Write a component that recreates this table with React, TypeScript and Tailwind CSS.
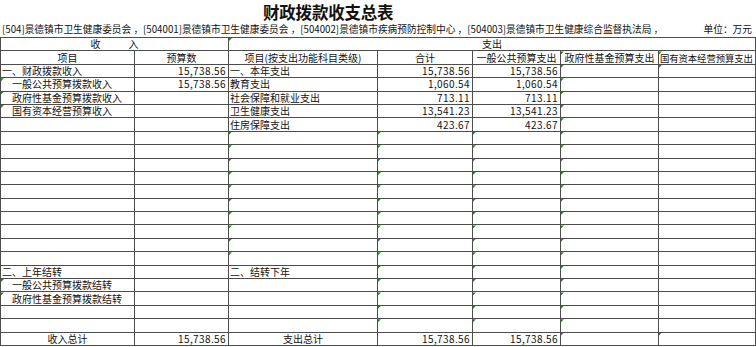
import React from 'react';

type Cell = { t?: string; a?: 'l' | 'r' | 'c'; ind?: boolean; g?: boolean; sm?: boolean };

const TOTAL = '15,738.56';

const labelsIn: Record<number, { t: string; ind?: boolean }> = {
  0: { t: '一、财政拨款收入' },
  1: { t: '一般公共预算拨款收入', ind: true },
  2: { t: '政府性基金预算拨款收入', ind: true },
  3: { t: '国有资本经营预算收入', ind: true },
  15: { t: '二、上年结转' },
  16: { t: '一般公共预算拨款结转', ind: true },
  17: { t: '政府性基金预算拨款结转', ind: true },
};

const outRows: Record<number, [string, string]> = {
  0: ['一、本年支出', TOTAL],
  1: ['教育支出', '1,060.54'],
  2: ['社会保障和就业支出', '713.11'],
  3: ['卫生健康支出', '13,541.23'],
  4: ['住房保障支出', '423.67'],
  15: ['二、结转下年', ''],
};

function buildRows(): Cell[][] {
  const rows: Cell[][] = [];
  for (let i = 0; i < 21; i++) {
    const empty = i >= 5 && i <= 19;
    const last = i === 20;
    const lin = labelsIn[i];
    const out = outRows[i];
    rows.push([
      last
        ? { t: '收入总计', a: 'c' }
        : { t: lin?.t, ind: lin?.ind, g: [1, 2, 3, 16, 17].includes(i) },
      { t: i <= 1 || last ? TOTAL : '', a: 'r' },
      last ? { t: '支出总计', a: 'c' } : { t: out?.[0], g: i >= 5 && i <= 14 },
      { t: last ? TOTAL : out?.[1], a: 'r', g: empty },
      { t: last ? TOTAL : out?.[1], a: 'r', g: empty },
      { g: true },
      { g: i === 0 || last },
    ]);
  }
  return rows;
}

function Mark() {
  return (
    <span className="absolute left-0 top-0 w-[3px] h-[3px] bg-[#1b8f1b] [clip-path:polygon(0_0,100%_0,0_100%)]" />
  );
}

function Td({ c }: { c: Cell }) {
  const align = c.a === 'r' ? 'justify-end pr-[2px] tracking-[0.4px]' : c.a === 'c' ? 'justify-center' : c.ind ? 'pl-[11px]' : 'pl-[1px]';
  return (
    <div className={`relative min-w-0 flex items-center whitespace-nowrap border-r border-b border-[#4d4d4d] ${align} ${c.sm ? 'text-[9.4px] tracking-[-0.1px]' : ''}`}>
      {c.g && <Mark />}
      {c.t}
    </div>
  );
}

export default function App() {
  const rows = buildRows();
  const head: Cell[] = [
    { t: '项目', a: 'c' },
    { t: '预算数', a: 'c' },
    { t: '项目(按支出功能科目类级)', a: 'c' },
    { t: '合计', a: 'c' },
    { t: '一般公共预算支出', a: 'c' },
    { t: '政府性基金预算支出', a: 'c', g: true },
    { t: '国有资本经营预算支出', sm: true, g: true },
  ];

  return (
    <div className="w-[756px] h-[347px] bg-white text-[#111] text-[10px] leading-[12px] overflow-hidden font-['Noto_Sans_CJK_SC','Noto_Sans',sans-serif]">
      <div className="h-[23px] pl-[263px] pt-[3px] text-[16.5px] leading-[18px] font-bold tracking-[-0.2px]">财政拨款收支总表</div>
      <div className="h-[14px] flex items-start justify-between pl-[2px] pr-[4px] text-[9.7px] leading-[12px]">
        <span>
          [504]景德镇市卫生健康委员会 ，[504001]景德镇市卫生健康委员会 ，[504002]景德镇市疾病预防控制中心 ，[504003]景德镇市卫生健康综合监督执法局 ，
        </span>
        <span>单位：万元</span>
      </div>
      <div className="w-[756px] grid grid-cols-[134px_94px_149px_95px_88px_98px_97px] auto-rows-[13.4px] border-l border-t border-[#4d4d4d]">
        <div className="col-span-2 flex items-center justify-center border-r border-b border-[#4d4d4d] tracking-[28px] pl-[28px]">收入</div>
        <div className="relative col-span-5 flex items-center justify-center border-r border-b border-[#4d4d4d]">
          <Mark />
          支出
        </div>
        {head.map((c, i) => (
          <Td key={`h${i}`} c={c} />
        ))}
        {rows.map((r, i) => r.map((c, j) => <Td key={`${i}-${j}`} c={c} />))}
      </div>
    </div>
  );
}
